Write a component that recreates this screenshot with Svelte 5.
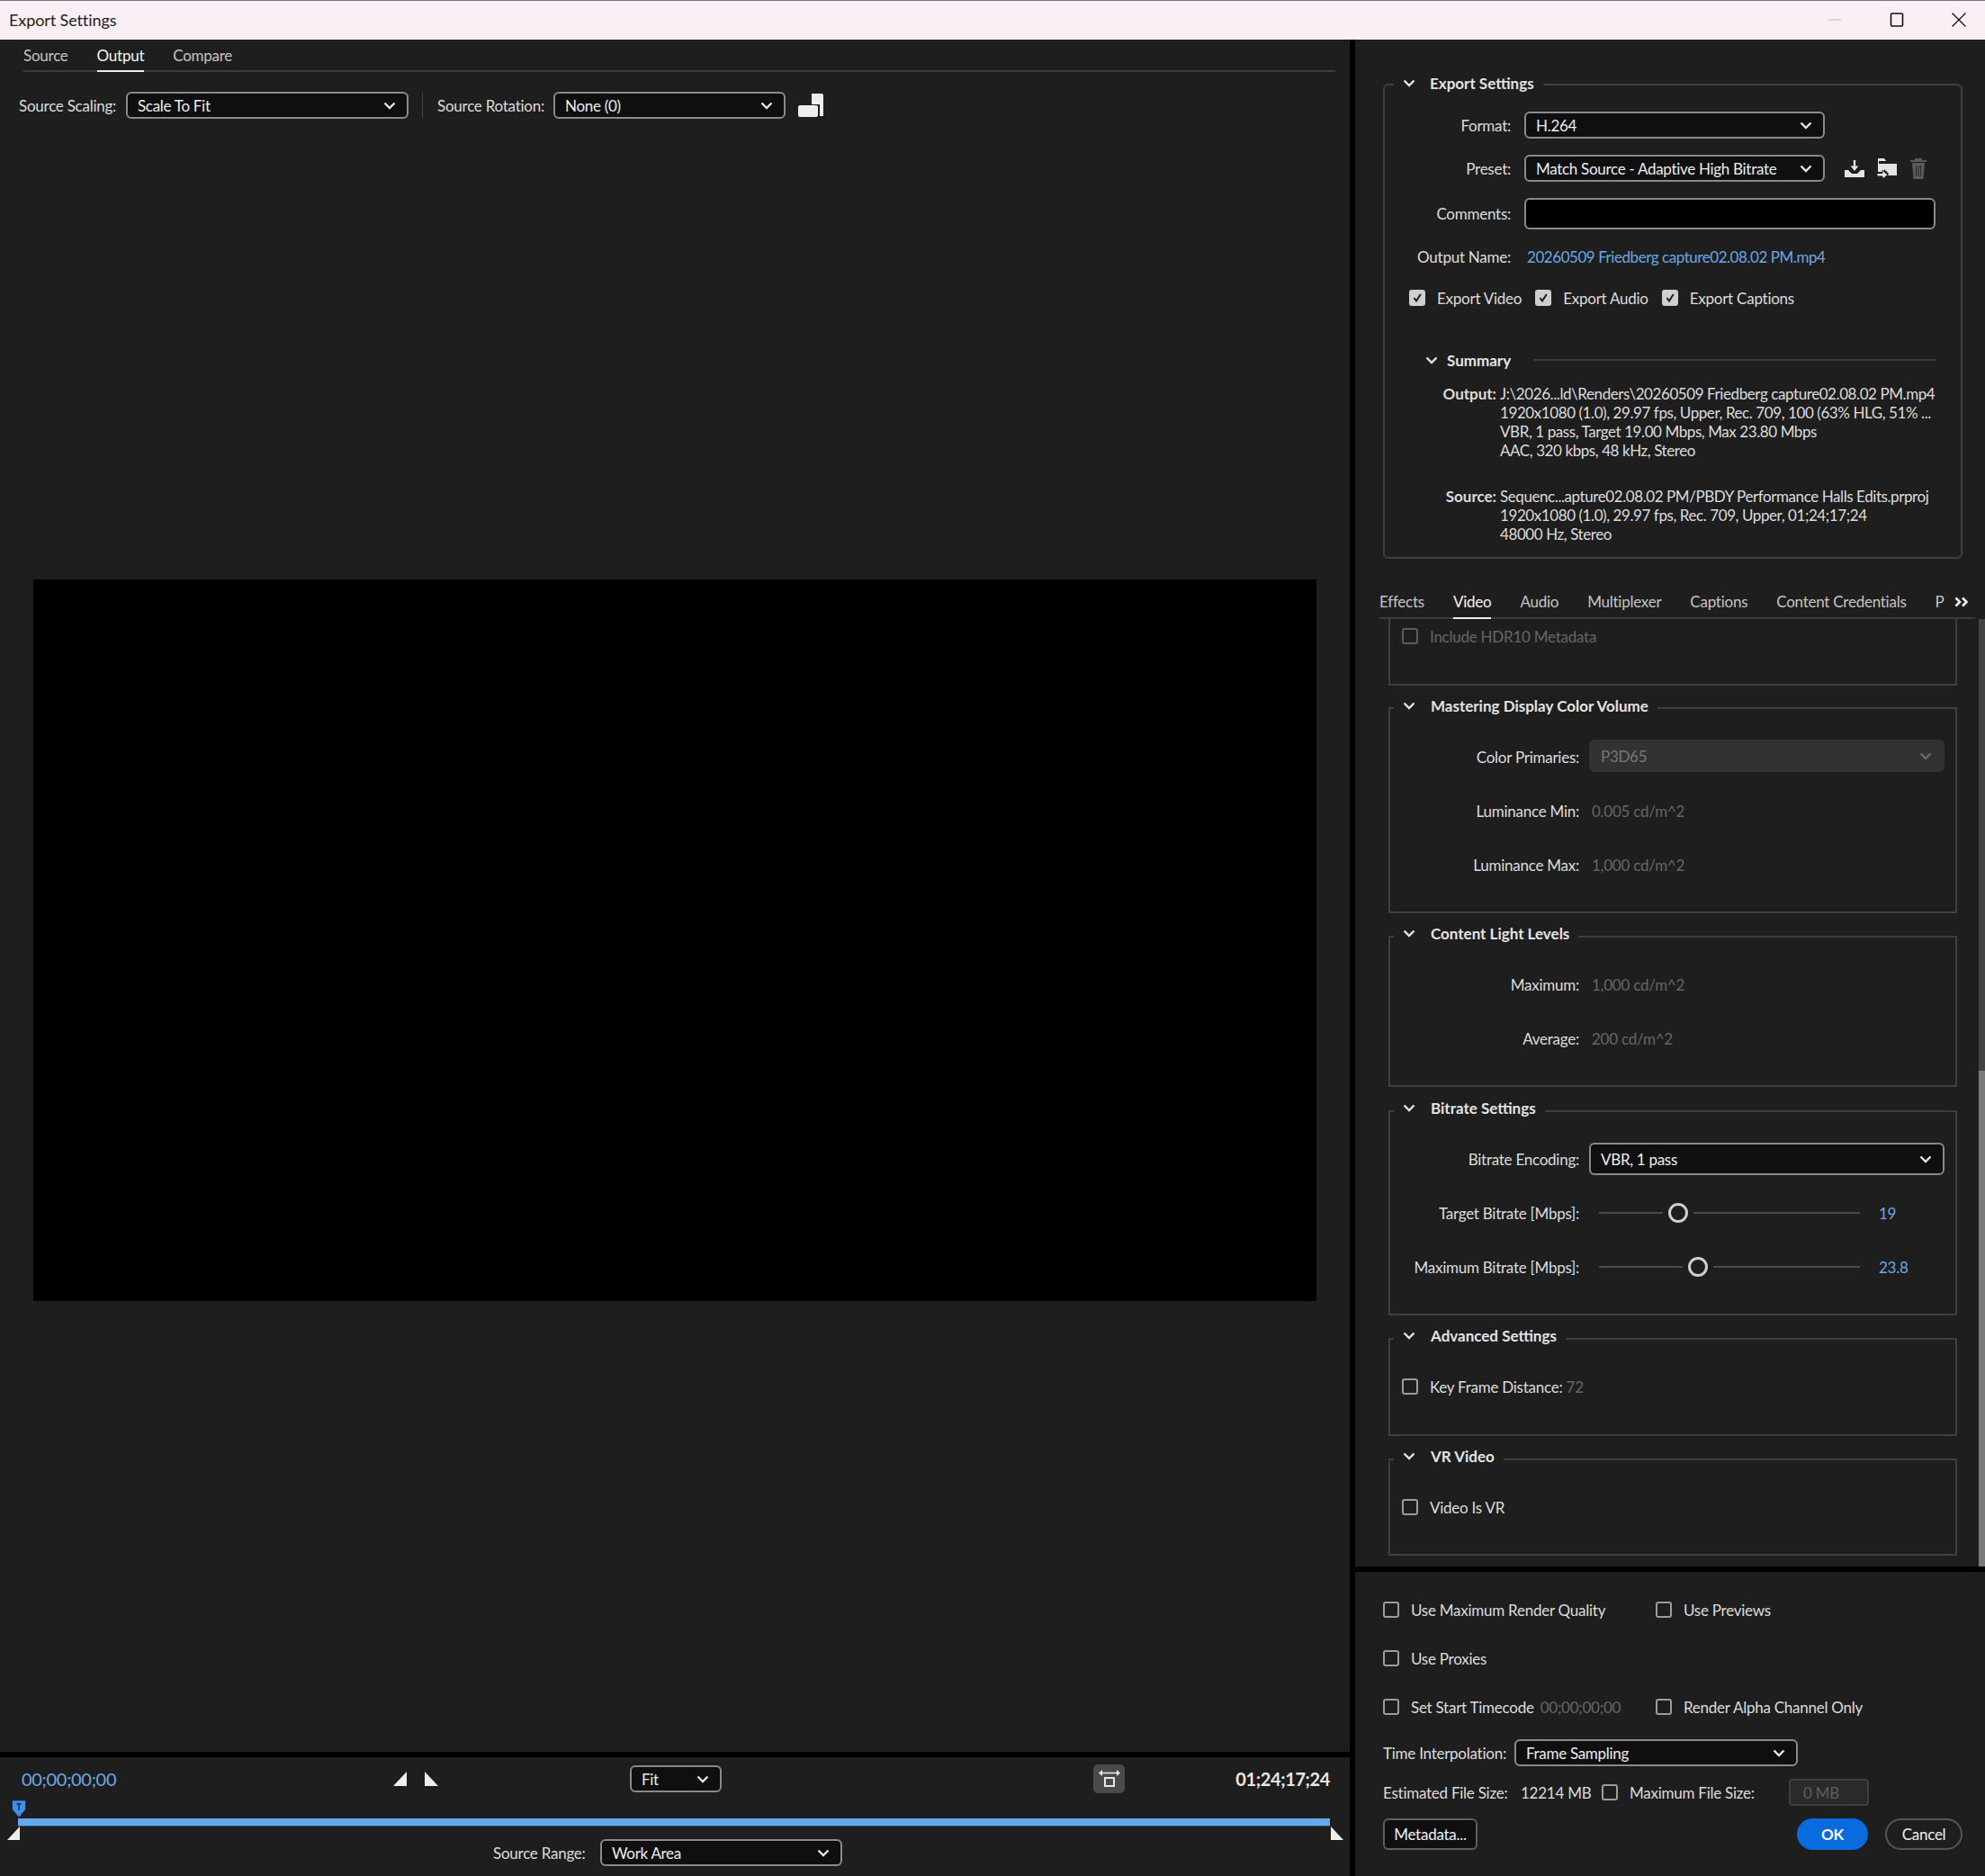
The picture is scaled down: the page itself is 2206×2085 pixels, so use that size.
<script lang="ts">
	let summaryOutput = [
		'J:\\2026...ld\\Renders\\20260509 Friedberg capture02.08.02 PM.mp4',
		'1920x1080 (1.0), 29.97 fps, Upper, Rec. 709, 100 (63% HLG, 51% ...',
		'VBR, 1 pass, Target 19.00 Mbps, Max 23.80 Mbps',
		'AAC, 320 kbps, 48 kHz, Stereo'
	];
	let summarySource = [
		'Sequenc...apture02.08.02 PM/PBDY Performance Halls Edits.prproj',
		'1920x1080 (1.0), 29.97 fps, Rec. 709, Upper, 01;24;17;24',
		'48000 Hz, Stereo'
	];
	let panelTabs = ['Effects', 'Video', 'Audio', 'Multiplexer', 'Captions', 'Content Credentials', 'P'];
	let sliders = [
		{ label: 'Target Bitrate [Mbps]:', left: 71, value: '19' },
		{ label: 'Maximum Bitrate [Mbps]:', left: 93, value: '23.8' }
	];
</script>

{#snippet chevron(cls = '')}
	<svg class="chev {cls}" viewBox="0 0 14 9" width="14" height="9"><path d="M1.500 1.500 7 7l5.500-5.500" fill="none" stroke="currentColor" stroke-width="2.400" /></svg>
{/snippet}

{#snippet dropdown(value, cls)}
	<div class="select {cls}">
		<span>{value}</span>
		{@render chevron()}
	</div>
{/snippet}

{#snippet check(label, checked = false, cls = '')}
	<div class="check {cls}">
		<span class="box" class:on={checked}>
			{#if checked}
				<svg viewBox="0 0 12 12" width="12" height="12"><path d="M2.500 6.200 5 9.500 9.800 2" fill="none" stroke="#1e1e1e" stroke-width="2" /></svg>
			{/if}
		</span>
		<span>{label}</span>
	</div>
{/snippet}

{#snippet legend(title)}
	<div class="legend">
		{@render chevron()}
		<span>{title}</span>
	</div>
{/snippet}

{#snippet field(label, value)}
	<div class="row">
		<span class="lbl">{label}</span>
		<span class="dim val">{value}</span>
	</div>
{/snippet}

<div class="window">
	<header class="titlebar">
		<span>Export Settings</span>
		<div class="winctl">
			<svg viewBox="0 0 16 16" width="16" height="16"><path d="M1 8h14" stroke="#c9c4c8" stroke-width="1.200" /></svg>
			<svg viewBox="0 0 16 16" width="16" height="16"><rect x="1.500" y="1" width="13" height="14" rx="1" fill="none" stroke="#111" stroke-width="1.600" /></svg>
			<svg viewBox="0 0 16 16" width="16" height="16"><path d="M.5.5l15 15M15.500.5l-15 15" stroke="#111" stroke-width="1.300" /></svg>
		</div>
	</header>

	<div class="main">
		<section class="left">
			<nav class="tabs left-tabs">
				<span>Source</span>
				<span class="active">Output</span>
				<span>Compare</span>
			</nav>

			<div class="scaling">
				<span class="scale-label">Source Scaling:</span>
				{@render dropdown('Scale To Fit', 'w-scale')}
				<span class="sep"></span>
				<span class="rot-label">Source Rotation:</span>
				{@render dropdown('None (0)', 'w-rot')}
				<svg class="rot-icon" viewBox="0 0 28 26" width="28" height="26">
					<path d="M15 0h11a2 2 0 0 1 2 2v23h-4V12H15z" fill="#eee" />
					<rect x="0" y="13" width="22" height="13" rx="2" fill="#eee" />
				</svg>
			</div>

			<div class="preview">
				<div class="video"></div>
			</div>

			<div class="transport">
				<div class="controls">
					<span class="tc-start">00;00;00;00</span>
					<div class="marks">
						<svg viewBox="0 0 15 16" width="15" height="16"><path d="M15 0v16H0z" fill="#eee" /></svg>
						<svg viewBox="0 0 15 16" width="15" height="16"><path d="M0 0v16h15z" fill="#eee" /></svg>
					</div>
					{@render dropdown('Fit', 'w-fit')}
					<div class="zoom-btn">
						<svg viewBox="0 0 24 20" width="24" height="20">
							<path d="M3 3.500h18" stroke="#e6e6e6" stroke-width="1.600" fill="none" />
							<path d="M0 3.500 4 0v7zM24 3.500 20 0v7z" fill="#e6e6e6" />
							<rect x="7" y="9" width="10" height="9" fill="none" stroke="#e6e6e6" stroke-width="2" />
						</svg>
					</div>
					<span class="tc-end">01;24;17;24</span>
				</div>
				<div class="track">
					<svg class="playhead" viewBox="0 0 18 21" width="18" height="21">
						<path d="M1.500 1h15v10L9 20 1.500 11z" fill="#3f8ee8" stroke="#17365c" />
						<path d="M9 5v7M6.500 5h5" stroke="#17263a" stroke-width="1.500" />
					</svg>
					<svg class="in-mark" viewBox="0 0 15 15" width="15" height="15"><path d="M14 0v15H0z" fill="#eee" /></svg>
					<svg class="out-mark" viewBox="0 0 15 15" width="15" height="15"><path d="M1 0v15h14z" fill="#eee" /></svg>
					<div class="bar"></div>
				</div>
				<div class="range">
					<span class="range-label">Source Range:</span>
					{@render dropdown('Work Area', 'w-range')}
				</div>
			</div>
		</section>

		<section class="right">
			<div class="group export">
				{@render legend('Export Settings')}
				<div class="form-row first">
					<span class="form-lbl">Format:</span>
					{@render dropdown('H.264', 'w-format')}
				</div>
				<div class="form-row">
					<span class="form-lbl">Preset:</span>
					{@render dropdown('Match Source - Adaptive High Bitrate', 'w-format')}
					<div class="preset-icons">
						<svg viewBox="0 0 22 19" width="22" height="19">
							<path d="M11 0v9" stroke="#e4e4e4" stroke-width="2.400" />
							<path d="M6.500 6.500 11 12l4.500-5.500z" fill="#e4e4e4" />
							<path d="M0 11h4l4 4h6l4-4h4v8H0z" fill="#e4e4e4" />
						</svg>
						<svg viewBox="0 0 22 23" width="22" height="23">
							<path d="M1 0h7l2 3H2v3h20v13H12l1-2-5-5v3H1z" fill="#e4e4e4" />
							<path d="M0 16.500h6v-3.500l6 5.500-6 4.500v-3H0z" fill="#e4e4e4" stroke="#1e1e1e" />
						</svg>
						<svg viewBox="0 0 20 23" width="20" height="23">
							<path d="M1 3h18M7 3V1h6v2" stroke="#5a5a5a" stroke-width="2" fill="none" />
							<path d="M3 5h14l-1.500 18h-11z" fill="#5a5a5a" />
							<path d="M7.500 8v12M10 8v12M12.500 8v12" stroke="#2a2a2a" stroke-width="1" />
						</svg>
					</div>
				</div>
				<div class="form-row">
					<span class="form-lbl">Comments:</span>
					<div class="comments"></div>
				</div>
				<div class="form-row out-name">
					<span class="form-lbl">Output Name:</span>
					<span class="link">20260509 Friedberg capture02.08.02 PM.mp4</span>
				</div>
				<div class="exports">
					{@render check('Export Video', true)}
					{@render check('Export Audio', true)}
					{@render check('Export Captions', true)}
				</div>

				<div class="summary-head">
					{@render chevron()}
					<strong>Summary</strong>
					<span class="rule"></span>
				</div>
				<div class="summary first">
					<strong>Output:</strong>
					<div>
						{#each summaryOutput as line}
							<p>{line}</p>
						{/each}
					</div>
				</div>
				<div class="summary second">
					<strong>Source:</strong>
					<div>
						{#each summarySource as line}
							<p>{line}</p>
						{/each}
					</div>
				</div>
			</div>

			<nav class="tabs panel-tabs">
				{#each panelTabs as tab}
					<span class:active={tab === 'Video'}>{tab}</span>
				{/each}
				<svg viewBox="0 0 16 12" width="16" height="12"><path d="M1.500 1.500 6 6l-4.500 4.500M9 1.500 13.500 6 9 10.500" fill="none" stroke="#eee" stroke-width="2.600" /></svg>
			</nav>

			<div class="scroller">
				<div class="scroll-content">
					<div class="group hdr">
						<div class="check dim-check">
							<span class="box"></span>
							<span>Include HDR10 Metadata</span>
						</div>
					</div>

					<div class="group mastering">
						{@render legend('Mastering Display Color Volume')}
						<div class="row first-row">
							<span class="lbl">Color Primaries:</span>
							{@render dropdown('P3D65', 'w-group disabled')}
						</div>
						{@render field('Luminance Min:', '0.005 cd/m^2')}
						{@render field('Luminance Max:', '1,000 cd/m^2')}
					</div>

					<div class="group light">
						{@render legend('Content Light Levels')}
						<div class="row first-row">
							<span class="lbl">Maximum:</span>
							<span class="dim val">1,000 cd/m^2</span>
						</div>
						{@render field('Average:', '200 cd/m^2')}
					</div>

					<div class="group bitrate">
						{@render legend('Bitrate Settings')}
						<div class="row first-row">
							<span class="lbl">Bitrate Encoding:</span>
							{@render dropdown('VBR, 1 pass', 'w-group')}
						</div>
						{#each sliders as s}
							<div class="row">
								<span class="lbl">{s.label}</span>
								<div class="slider">
									<span class="seg" style="width: {s.left}px"></span>
									<span class="thumb"></span>
									<span class="seg grow"></span>
								</div>
								<span class="link slider-val">{s.value}</span>
							</div>
						{/each}
					</div>

					<div class="group advanced">
						{@render legend('Advanced Settings')}
						<div class="row first-row boxed">
							<div class="check">
								<span class="box"></span>
								<span>Key Frame Distance: <span class="dim">72</span></span>
							</div>
						</div>
					</div>

					<div class="group vr">
						{@render legend('VR Video')}
						<div class="row first-row boxed">
							{@render check('Video Is VR')}
						</div>
					</div>
				</div>
				<div class="scrollbar"><div class="scroll-thumb"></div></div>
			</div>

			<div class="bottom">
				<div class="opt-row">
					{@render check('Use Maximum Render Quality', false, 'col')}
					{@render check('Use Previews')}
				</div>
				<div class="opt-row">
					{@render check('Use Proxies')}
				</div>
				<div class="opt-row">
					<div class="check col">
						<span class="box"></span>
						<span>Set Start Timecode</span>
						<span class="dim tc-dim">00;00;00;00</span>
					</div>
					{@render check('Render Alpha Channel Only')}
				</div>
				<div class="interp">
					<span class="interp-label">Time Interpolation:</span>
					{@render dropdown('Frame Sampling', 'w-interp')}
				</div>
				<div class="size">
					<span class="est-label">Estimated File Size:</span>
					<span class="est-val">12214 MB</span>
					{@render check('Maximum File Size:', false, 'max-size')}
					<div class="mb-input">0 MB</div>
				</div>
				<div class="actions">
					<button class="meta">Metadata...</button>
					<button class="ok">OK</button>
					<button class="cancel">Cancel</button>
				</div>
			</div>
		</section>
	</div>
</div>

<style>
	:global(body) {
		background: #1e1e1e;
	}

	.window {
		width: 2206px;
		height: 2085px;
		display: flex;
		flex-direction: column;
		font-family: Lato, "Liberation Sans", sans-serif;
		font-size: 17px;
		letter-spacing: -0.25px;
		color: #dcdcdc;
		background: #1e1e1e;
		overflow: hidden;
	}

	.titlebar {
		height: 44px;
		box-sizing: border-box;
		flex: none;
		display: flex;
		align-items: center;
		justify-content: space-between;
		padding: 0 21px 2px 10px;
		background: #f9eff5;
		border-top: 1px solid #77757a;
		color: #222;
		font-size: 18px;
		letter-spacing: -0.1px;
	}

	.winctl {
		display: flex;
		gap: 53px;
		align-items: center;
	}

	.main {
		flex: 1;
		display: flex;
		min-height: 0;
	}

	.left {
		width: 1500px;
		flex: none;
		display: flex;
		flex-direction: column;
		border-right: 6px solid #000;
	}

	.tabs {
		display: flex;
		color: #c4c4c4;
		box-sizing: border-box;
		border-bottom: 2px solid #3b3b3b;
	}

	.tabs span {
		display: flex;
		align-items: center;
		margin-bottom: -2px;
		border-bottom: 2px solid transparent;
	}

	.tabs span.active {
		color: #f4f4f4;
		border-bottom-color: #eee;
	}

	.left-tabs {
		height: 36px;
		margin: 0 16px 0 26px;
		gap: 32px;
	}

	.scaling {
		display: flex;
		align-items: center;
		height: 30px;
		margin-top: 22px;
		padding-left: 21px;
	}

	.scale-label {
		width: 119px;
		flex: none;
		white-space: nowrap;
	}

	.rot-label {
		width: 129px;
		flex: none;
		white-space: nowrap;
	}

	.sep {
		width: 1px;
		height: 28px;
		background: #444;
		margin: 0 16px 0 15px;
	}

	.rot-icon {
		margin-left: 14px;
	}

	.select {
		display: flex;
		align-items: center;
		justify-content: space-between;
		box-sizing: border-box;
		height: 30px;
		padding: 0 12px 0 11px;
		background: #0f0f0f;
		border: 2px solid #8a8a8a;
		border-radius: 6px;
		color: #ececec;
		flex: none;
		white-space: nowrap;
		letter-spacing: -0.3px;
	}

	.chev {
		color: #e4e4e4;
		flex: none;
	}

	.select.disabled {
		background: #323232;
		border-color: #323232;
		color: #777;
	}

	.select.disabled .chev {
		color: #6a6a6a;
	}

	.w-scale { width: 314px; }
	.w-rot { width: 258px; }
	.w-fit { width: 102px; }
	.w-range { width: 269px; }
	.w-format { width: 334px; }
	.w-interp { width: 315px; }
	.w-group { width: 395px; height: 36px; }

	.preview {
		flex: 1;
		padding: 512px 37px 0;
	}

	.video {
		height: 802px;
		background: #000;
	}

	.transport {
		height: 138px;
		flex: none;
		box-sizing: border-box;
		border-top: 6px solid #000;
	}

	.controls {
		display: flex;
		align-items: center;
		height: 30px;
		margin-top: 9px;
		padding-left: 24px;
	}

	.tc-start {
		width: 413px;
		font-size: 20px;
		letter-spacing: -0.3px;
		color: #6aa7e6;
	}

	.marks {
		width: 263px;
		display: flex;
		gap: 20px;
	}

	.zoom-btn {
		width: 35px;
		height: 32px;
		margin-left: 413px;
		background: #4a4a4a;
		border-radius: 5px;
		display: flex;
		align-items: center;
		justify-content: center;
	}

	.tc-end {
		flex: 1;
		text-align: right;
		padding-right: 22px;
		font-size: 20px;
		letter-spacing: -0.4px;
		font-weight: 700;
		color: #e8e8e8;
	}

	.track {
		position: relative;
		height: 52px;
		padding: 29px 22px 0 20px;
		box-sizing: border-box;
	}

	.bar {
		height: 8px;
		background: #64a8ee;
		border-bottom: 1px solid #2f4f72;
	}

	.playhead {
		position: absolute;
		left: 12px;
		top: 8px;
	}

	.in-mark {
		position: absolute;
		left: 8px;
		top: 38px;
	}

	.out-mark {
		position: absolute;
		left: 1478px;
		top: 38px;
	}

	.range {
		display: flex;
		align-items: center;
		padding-left: 548px;
	}

	.range-label {
		width: 119px;
		flex: none;
	}

	.right {
		flex: 1;
		display: flex;
		flex-direction: column;
		min-width: 0;
	}

	.group {
		box-sizing: border-box;
		border: 2px solid #3f3f3f;
		flex: none;
	}

	.legend {
		display: flex;
		align-items: center;
		gap: 17px;
		width: fit-content;
		height: 24px;
		margin: -17px 0 0 4px;
		padding: 0 10px;
		background: #1e1e1e;
		font-weight: 700;
		color: #e4e4e4;
		letter-spacing: 0;
	}

	.export {
		height: 528px;
		margin: 49px 25px 0 31px;
		border-radius: 6px;
	}

	.export .legend {
		margin: -15px 0 0 10px;
		gap: 16px;
	}

	.form-row {
		display: flex;
		align-items: center;
		min-height: 30px;
		margin-top: 18px;
	}

	.form-row.first {
		margin-top: 20px;
	}

	.form-row.out-name {
		margin-top: 15px;
	}

	.form-lbl {
		width: 140px;
		margin-right: 15px;
		text-align: right;
		flex: none;
	}

	.comments {
		width: 457px;
		height: 35px;
		box-sizing: border-box;
		background: #000;
		border: 2px solid #8a8a8a;
		border-radius: 6px;
	}

	.preset-icons {
		display: flex;
		align-items: center;
		gap: 14px;
		margin-left: 22px;
	}

	.link {
		color: #6aa7e6;
		padding-left: 2px;
	}

	.out-name .link {
		padding-left: 3px;
		letter-spacing: -0.45px;
	}

	.exports {
		display: flex;
		gap: 15px;
		margin: 19px 0 0 27px;
		height: 24px;
	}

	.check {
		display: flex;
		align-items: center;
		gap: 13px;
		height: 24px;
		flex: none;
	}

	.box {
		width: 18px;
		height: 18px;
		box-sizing: border-box;
		border: 2.500px solid #9c9c9c;
		border-radius: 3px;
		flex: none;
		display: flex;
		align-items: center;
		justify-content: center;
	}

	.box.on {
		background: #cfcfcf;
		border-color: #cfcfcf;
	}

	.summary-head {
		display: flex;
		align-items: center;
		height: 24px;
		margin: 45px 27px 0 45px;
		gap: 10px;
	}

	.summary-head strong {
		font-weight: 700;
		color: #e4e4e4;
		letter-spacing: 0;
	}

	.rule {
		flex: 1;
		height: 2px;
		margin-left: 15px;
		background: #3b3b3b;
	}

	.summary {
		display: flex;
		gap: 4px;
		line-height: 21px;
		letter-spacing: -0.42px;
	}

	.summary.first {
		margin-top: 15px;
	}

	.summary.second {
		margin-top: 30px;
	}

	.summary strong {
		width: 124px;
		text-align: right;
		font-weight: 700;
		flex: none;
		letter-spacing: 0;
	}

	.summary p {
		margin: 0;
		white-space: nowrap;
	}

	.panel-tabs {
		height: 37px;
		margin: 30px 11px 0 27px;
		gap: 32px;
		flex: none;
		position: relative;
		align-items: stretch;
	}

	.panel-tabs svg {
		align-self: center;
		margin-left: -20px;
	}

	.scroller {
		flex: none;
		height: 1053px;
		display: flex;
		padding-left: 37px;
		overflow: hidden;
	}

	.scroll-content {
		width: 632px;
		display: flex;
		flex-direction: column;
	}

	.scrollbar {
		width: 7px;
		margin-left: 24px;
		background: #444;
		padding-top: 502px;
		box-sizing: border-box;
	}

	.scroll-thumb {
		height: 100%;
		background: #7a7a7a;
	}

	.hdr {
		height: 74px;
		border-top: none;
		padding: 7px 0 0 13px;
	}

	.dim-check {
		color: #666;
	}

	.dim-check .box {
		border-color: #5c5c5c;
	}

	.mastering { height: 229px; margin-top: 24px; }
	.light { height: 168px; margin-top: 25px; }
	.bitrate { height: 228px; margin-top: 26px; }
	.advanced { height: 109px; margin-top: 25px; }
	.vr { height: 108px; margin-top: 25px; }

	.mastering .legend {
		margin-top: -16px;
	}

	.mastering .first-row {
		margin-top: 26px;
	}

	.row {
		display: flex;
		align-items: center;
		height: 36px;
		margin-top: 24px;
	}

	.mastering .row .lbl,
	.mastering .row .val {
		padding-top: 2px;
	}

	.first-row {
		margin-top: 27px;
	}

	.boxed {
		padding-left: 13px;
	}

	.lbl {
		width: 210px;
		margin-right: 11px;
		text-align: right;
		flex: none;
		white-space: nowrap;
	}

	.dim {
		color: #666;
	}

	.val {
		padding-left: 3px;
	}

	.slider {
		width: 290px;
		margin-left: 11px;
		display: flex;
		align-items: center;
		gap: 6px;
	}

	.seg {
		height: 2px;
		background: #4a4a4a;
	}

	.seg.grow {
		flex: 1;
	}

	.thumb {
		width: 22px;
		height: 22px;
		box-sizing: border-box;
		border: 3.500px solid #d0d0d0;
		border-radius: 50%;
	}

	.slider-val {
		margin-left: 19px;
	}

	.bottom {
		flex: 1;
		border-top: 6px solid #000;
		padding: 30px 25px 0 31px;
	}

	.opt-row {
		display: flex;
		height: 24px;
		margin-bottom: 30px;
	}

	.col {
		width: 303px;
	}

	.tc-dim {
		margin-left: -6px;
	}

	.interp {
		display: flex;
		align-items: center;
		margin-top: -6px;
	}

	.interp-label {
		width: 146px;
		flex: none;
	}

	.size {
		display: flex;
		align-items: center;
		height: 30px;
		margin-top: 14px;
	}

	.est-label {
		width: 153px;
		flex: none;
	}

	.est-val {
		width: 90px;
		flex: none;
	}

	.max-size {
		width: 208px;
	}

	.mb-input {
		width: 89px;
		height: 30px;
		box-sizing: border-box;
		padding-left: 14px;
		display: flex;
		align-items: center;
		background: #2a2a2a;
		border: 2px solid #3e3e3e;
		border-radius: 4px;
		color: #5e5e5e;
	}

	.actions {
		display: flex;
		align-items: center;
		margin-top: 14px;
	}

	button {
		font: inherit;
		letter-spacing: inherit;
		height: 35px;
		box-sizing: border-box;
		color: #f0f0f0;
		padding: 0;
	}

	.meta {
		width: 105px;
		background: #0f0f0f;
		border: 2px solid #5e5e5e;
		border-radius: 6px;
		margin-right: auto;
	}

	.ok {
		width: 79px;
		background: #0a6bdf;
		border: none;
		border-radius: 18px;
		font-weight: 700;
		color: #fff;
		margin-right: 19px;
	}

	.cancel {
		width: 86px;
		background: transparent;
		border: 2px solid #555;
		border-radius: 18px;
	}
</style>
